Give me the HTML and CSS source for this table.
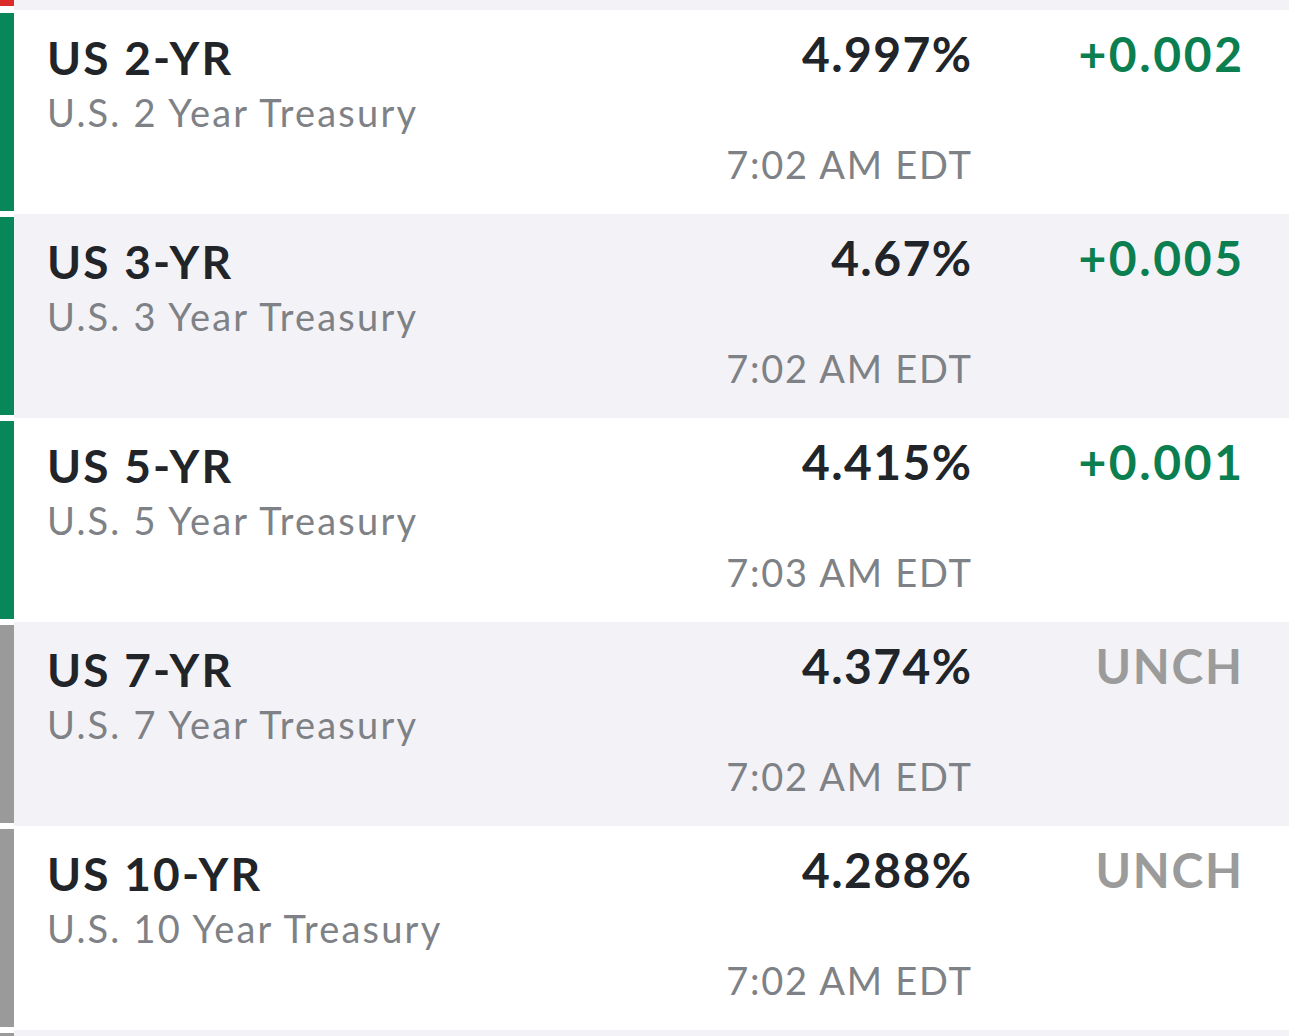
FILE: index.html
```html
<!DOCTYPE html>
<html lang="en">
<head>
<meta charset="utf-8">
<title>US Treasuries</title>
<link rel="stylesheet" href="styles.css">
</head>
<body>
<div class="list">
  <div class="row row-alt row-partial-top">
    <div class="bar-col"><div class="bar bar-red"></div></div>
    <div class="fill"></div>
  </div>

  <div class="row">
    <div class="bar-col"><div class="bar bar-up"></div></div>
    <div class="info">
      <div class="symbol">US 2-YR</div>
      <div class="name">U.S. 2 Year Treasury</div>
    </div>
    <div class="quote">
      <div class="price">4.997%</div>
      <div class="time">7:02 AM EDT</div>
    </div>
    <div class="change"><span class="change-up">+0.002</span></div>
  </div>

  <div class="row row-alt">
    <div class="bar-col"><div class="bar bar-up"></div></div>
    <div class="info">
      <div class="symbol">US 3-YR</div>
      <div class="name">U.S. 3 Year Treasury</div>
    </div>
    <div class="quote">
      <div class="price">4.67%</div>
      <div class="time">7:02 AM EDT</div>
    </div>
    <div class="change"><span class="change-up">+0.005</span></div>
  </div>

  <div class="row">
    <div class="bar-col"><div class="bar bar-up"></div></div>
    <div class="info">
      <div class="symbol">US 5-YR</div>
      <div class="name">U.S. 5 Year Treasury</div>
    </div>
    <div class="quote">
      <div class="price">4.415%</div>
      <div class="time">7:03 AM EDT</div>
    </div>
    <div class="change"><span class="change-up">+0.001</span></div>
  </div>

  <div class="row row-alt">
    <div class="bar-col"><div class="bar bar-flat"></div></div>
    <div class="info">
      <div class="symbol">US 7-YR</div>
      <div class="name">U.S. 7 Year Treasury</div>
    </div>
    <div class="quote">
      <div class="price">4.374%</div>
      <div class="time">7:02 AM EDT</div>
    </div>
    <div class="change"><span class="change-flat">UNCH</span></div>
  </div>

  <div class="row">
    <div class="bar-col"><div class="bar bar-flat"></div></div>
    <div class="info">
      <div class="symbol">US 10-YR</div>
      <div class="name">U.S. 10 Year Treasury</div>
    </div>
    <div class="quote">
      <div class="price">4.288%</div>
      <div class="time">7:02 AM EDT</div>
    </div>
    <div class="change"><span class="change-flat">UNCH</span></div>
  </div>

  <div class="row row-alt row-partial-bottom">
    <div class="bar-col"><div class="bar bar-flat"></div></div>
    <div class="fill"></div>
  </div>
</div>
</body>
</html>
```

FILE: styles.css
```css
* {
  box-sizing: border-box;
}

html, body {
  margin: 0;
  padding: 0;
  background: #ffffff;
}

body {
  font-family: "Lato", "Liberation Sans", sans-serif;
  overflow: hidden;
}

.list {
  display: flex;
  flex-direction: column;
}

.row {
  display: flex;
  height: 204px;
  background: #ffffff;
}

.row-alt {
  background: #f3f3f7;
}

.bar-col {
  width: 14px;
  flex: none;
  background: #ffffff;
  display: flex;
  flex-direction: column;
  padding: 3px 0;
}

.bar {
  flex: 1;
  width: 14px;
}

.bar-up { background: #08875a; }
.bar-flat { background: #9a9a9a; }
.bar-red { background: #dc2b2b; }

.row-partial-top {
  height: 10px;
}
.row-partial-top .bar-col {
  padding: 0 0 4px 0;
}

.row-partial-bottom {
  height: 10px;
}
.row-partial-bottom .bar-col {
  padding: 3px 0 0 0;
}

.fill {
  flex: 1;
}

.info {
  flex: 1;
  padding: 24px 0 0 33px;
}

.symbol {
  font-size: 46px;
  line-height: 48px;
  font-weight: 700;
  letter-spacing: 2.2px;
  color: #212428;
}

.name {
  margin-top: 8px;
  font-size: 38px;
  line-height: 44px;
  font-weight: 400;
  letter-spacing: 2.2px;
  color: #7e8185;
}

.quote {
  flex: none;
  text-align: right;
  padding-top: 19px;
}

.price {
  font-size: 48px;
  line-height: 50px;
  font-weight: 700;
  letter-spacing: 1.4px;
  margin-right: -1.4px;
  color: #212428;
}

.time {
  margin-top: 63px;
  font-size: 38px;
  line-height: 44px;
  font-weight: 400;
  letter-spacing: 1.8px;
  margin-right: -1.8px;
  color: #7e8185;
}

.change {
  flex: none;
  width: 318px;
  padding: 19px 47px 0 0;
  text-align: right;
  font-size: 48px;
  line-height: 50px;
  font-weight: 700;
}

.change-up {
  color: #0b7f50;
  letter-spacing: 2.6px;
  margin-right: -2.6px;
}

.change-flat {
  color: #9b9b9b;
  letter-spacing: 1.7px;
  margin-right: -1.7px;
}
```
